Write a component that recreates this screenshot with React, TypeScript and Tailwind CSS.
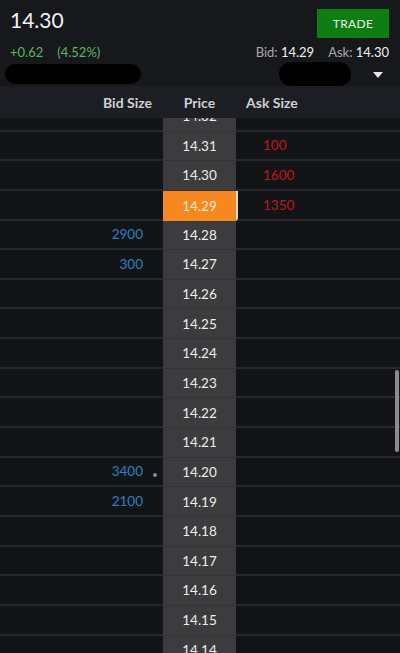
import React from 'react';

type Row = { price: string; bid?: string; ask?: string; active?: boolean; dot?: boolean };

const rows: Row[] = [
  { price: '14.32' },
  { price: '14.31', ask: '100' },
  { price: '14.30', ask: '1600' },
  { price: '14.29', ask: '1350', active: true },
  { price: '14.28', bid: '2900' },
  { price: '14.27', bid: '300' },
  { price: '14.26' },
  { price: '14.25' },
  { price: '14.24' },
  { price: '14.23' },
  { price: '14.22' },
  { price: '14.21' },
  { price: '14.20', bid: '3400', dot: true },
  { price: '14.19', bid: '2100' },
  { price: '14.18' },
  { price: '14.17' },
  { price: '14.16' },
  { price: '14.15' },
  { price: '14.14' },
];

function LadderRow({ row }: { row: Row }) {
  return (
    <div className="flex h-[29.65px] shrink-0">
      {/* bid side */}
      <div className="relative flex w-[163px] items-center justify-end border-b-2 border-[#26282c] pr-[20px] text-[13.5px] text-[#2f7fc4]">
        {row.bid}
        {row.dot && <span className="absolute right-[6px] top-[15px] h-[4px] w-[4px] rounded-full bg-[#8a8c90]" />}
      </div>
      {/* price */}
      <div
        className={
          row.active
            ? 'flex w-[73px] items-center justify-center bg-[#f7881f] text-[13.5px] text-[#fde8d4]'
            : 'flex w-[73px] items-center justify-center border-b border-[#343437] bg-[#3c3c3f] text-[13.5px] text-[#ececec]'
        }
      >
        {row.price}
      </div>
      {/* ask side */}
      <div
        className={
          row.active
            ? 'flex flex-1 items-center border-b-2 border-l-2 border-[#26282c] border-l-[#d9d9d9] pl-[25px] text-[13.5px] text-[#c2161c]'
            : 'flex flex-1 items-center border-b-2 border-[#26282c] pl-[27px] text-[13.5px] text-[#c2161c]'
        }
      >
        {row.ask}
      </div>
    </div>
  );
}

export default function App() {
  return (
    <div
      className="relative h-[653px] w-[400px] overflow-hidden bg-[#131418]"
      style={{ fontFamily: 'Lato, "Open Sans", sans-serif' }}
    >
      {/* quote header */}
      <div className="h-[86px] bg-[#17181c] px-[10px]">
        <div className="flex items-start justify-between pt-[6px]">
          <div className="text-[21px] leading-[28px] text-[#f2f2f2]">14.30</div>
          <button className="mr-[1px] mt-[3px] flex h-[29px] w-[72px] items-center justify-center bg-[#0e7e12] text-[12px] tracking-wide text-[#e6f3e6]">
            TRADE
          </button>
        </div>
        <div className="mt-[5px] flex items-center justify-between text-[13px]">
          <div className="flex gap-[14px] text-[#5cb65c]">
            <span>+0.62</span>
            <span>(4.52%)</span>
          </div>
          <div className="mr-[1px] flex gap-[14px]">
            <span className="text-[#a8a9ad]">
              Bid: <span className="text-[#f0f0f0]">14.29</span>
            </span>
            <span className="text-[#a8a9ad]">
              Ask: <span className="text-[#f0f0f0]">14.30</span>
            </span>
          </div>
        </div>
        <div className="relative flex h-[26px] items-start">
          <div className="ml-[-5px] mt-[1px] h-[20px] w-[136px] rounded-full bg-black" />
          <div className="ml-auto mr-[22px] mt-[-1px] h-[24px] w-[72px] rounded-full bg-black" />
          <svg className="mr-[7px] mt-[9px]" width="10" height="6" viewBox="0 0 10 6">
            <path d="M0 0 L10 0 L5 6 Z" fill="#e6e6e6" />
          </svg>
        </div>
      </div>

      {/* column labels */}
      <div className="flex h-[32px] items-center bg-[#1c1e23] text-[14px] font-bold text-[#cfd0d4]">
        <div className="w-[163px] pr-[11px] text-right">Bid Size</div>
        <div className="w-[73px] text-center">Price</div>
        <div className="flex-1 pl-[10px]">Ask Size</div>
      </div>

      {/* ladder */}
      <div className="h-[535px] overflow-hidden">
        <div className="mt-[-16px] flex flex-col">
          {rows.map((r) => (
            <LadderRow key={r.price} row={r} />
          ))}
        </div>
      </div>

      {/* scrollbar */}
      <div className="absolute right-[1px] top-[370px] h-[82px] w-[4px] rounded-sm bg-[#8c8c8e]" />
    </div>
  );
}
